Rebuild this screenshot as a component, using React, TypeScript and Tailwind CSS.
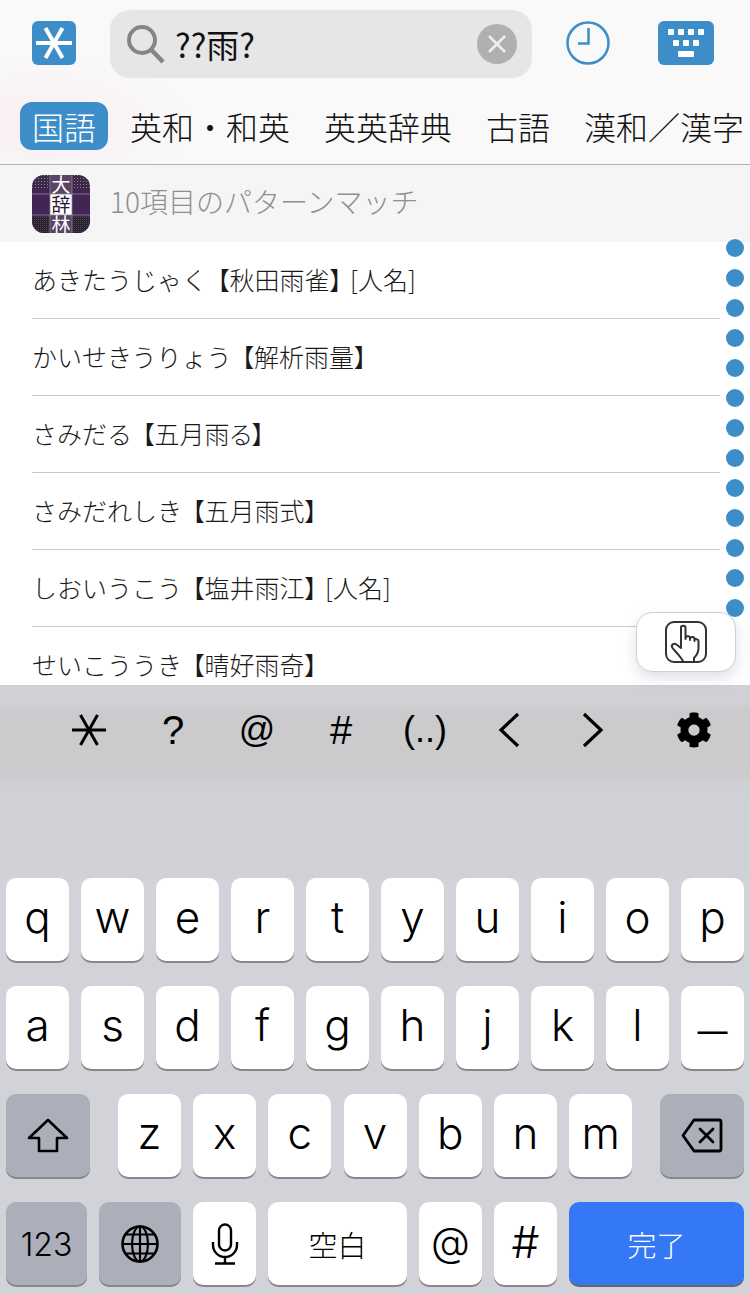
import { FaCog } from "react-icons/fa";

const BLUE = "#3d8dc9";

const tabs = ["英和・和英", "英英辞典", "古語", "漢和／漢字"];
const rows = [
  { kana: "あきたうじゃく", kanji: "秋田雨雀", tail: "[人名]" },
  { kana: "かいせきうりょう", kanji: "解析雨量", tail: "" },
  { kana: "さみだる", kanji: "五月雨る", tail: "" },
  { kana: "さみだれしき", kanji: "五月雨式", tail: "" },
  { kana: "しおいうこう", kanji: "塩井雨江", tail: "[人名]" },
  { kana: "せいこううき", kanji: "晴好雨奇", tail: "" },
];
const dots = Array.from({ length: 13 }, (_, i) => i);

function Key({ label, className = "" }: { label: string; className?: string }) {
  return (
    <div
      className={
        "flex h-[83px] w-[63px] shrink-0 items-center justify-center rounded-[10px] bg-white font-['Inter',sans-serif] text-black shadow-[0_2px_0_#88888c] " +
        className
      }
    >
      {label}
    </div>
  );
}

function GrayKey({ className = "", children }: { className?: string; children: React.ReactNode }) {
  return (
    <div
      className={
        "flex h-[83px] shrink-0 items-center justify-center rounded-[10px] bg-[#acaeb9] text-black shadow-[0_2px_0_#88888c] " +
        className
      }
    >
      {children}
    </div>
  );
}

function Asterisk({ color, width, size, inset }: { color: string; width: number; size: number; inset: number }) {
  return (
    <svg width={size} height={size} viewBox="0 0 44 44" fill="none" stroke={color} strokeWidth={width} style={{ display: "block" }}>
      <path d={`M${inset} 22H${44 - inset}`} />
      <path d="M13.5 7L30.5 37" />
      <path d="M30.5 7L13.5 37" />
    </svg>
  );
}

function ToolText({ className, children }: { className: string; children: React.ReactNode }) {
  return (
    <div className={"flex w-[84px] shrink-0 items-center justify-center font-['Liberation_Sans',sans-serif] text-black " + className}>
      {children}
    </div>
  );
}

function DictIcon() {
  return (
    <svg width="58" height="58" viewBox="0 0 58 58" className="shrink-0">
      <defs>
        <pattern id="dots" width="3" height="3" patternUnits="userSpaceOnUse">
          <rect width="3" height="3" fill="#3d2a48" />
          <rect width="1" height="1" fill="#8a8590" />
        </pattern>
        <pattern id="check" width="2" height="2" patternUnits="userSpaceOnUse">
          <rect width="2" height="2" fill="#2a2030" />
          <rect width="1" height="1" fill="#4a4650" />
        </pattern>
        <clipPath id="round">
          <rect width="58" height="58" rx="12" />
        </clipPath>
      </defs>
      <g clipPath="url(#round)">
        <rect width="58" height="58" fill="#432555" />
        <rect width="58" height="14" fill="url(#dots)" />
        <rect y="42" width="58" height="16" fill="url(#check)" />
        <rect x="18" width="22" height="58" fill="#5a4466" />
        <rect x="18" y="19" width="22" height="21" fill="#ffffff" />
        <path d="M0 19H58M0 40H58M18 0V58M40 0V58" stroke="#8d8594" strokeWidth="0.8" />
        <text x="29" y="17" textAnchor="middle" fontSize="19" fill="#fff" fontFamily="'Noto Sans CJK JP',sans-serif">大</text>
        <text x="29" y="37" textAnchor="middle" fontSize="19" fill="#2a1a35" fontFamily="'Noto Sans CJK JP',sans-serif">辞</text>
        <text x="29" y="57" textAnchor="middle" fontSize="19" fill="#fff" fontFamily="'Noto Sans CJK JP',sans-serif">林</text>
      </g>
    </svg>
  );
}

export default function App() {
  return (
    <div className="relative flex h-[1294px] w-[750px] flex-col overflow-hidden bg-white font-['Noto_Sans_CJK_JP',sans-serif]">
      {/* header */}
      <div className="h-[165px] shrink-0 border-b border-[#b4b4b6] bg-[#f9f9f9] bg-[radial-gradient(ellipse_150px_70px_at_40px_125px,#f9eef1,#f9f9f9)]">
        <div className="mt-[10px] flex h-[68px] items-center pt-0">
          <div className="mb-[2px] ml-[32px] flex h-[44px] w-[44px] items-center justify-center rounded-[6px] bg-[#3d8dc9]">
            <Asterisk color="#fff" width={4} size={44} inset={4} />
          </div>
          <div className="ml-[34px] flex h-[68px] w-[422px] items-center rounded-[20px] bg-[#e6e6e8] pl-[16px] pr-[15px]">
            <svg width="40" height="40" viewBox="0 0 40 40" fill="none" stroke="#858588" strokeWidth="4" className="mt-[2px] shrink-0">
              <circle cx="16" cy="15" r="13" />
              <path d="M25.5 25L37 37" strokeWidth="4.5" />
            </svg>
            <span className="ml-[9px] text-[33px] font-normal leading-none text-[#111]">??雨?</span>
            <div className="ml-auto flex h-[40px] w-[40px] items-center justify-center rounded-full bg-[#b0b0b2]">
              <svg width="20" height="20" viewBox="0 0 20 20" stroke="#eeeeee" strokeWidth="2.5">
                <path d="M2 2L18 18M18 2L2 18" />
              </svg>
            </div>
          </div>
          <svg width="44" height="44" viewBox="0 0 44 44" fill="none" stroke={BLUE} className="mb-[2px] ml-[34px]">
            <circle cx="22" cy="22" r="20.5" strokeWidth="2.5" />
            <path d="M22.5 7V22.5H12" strokeWidth="2.5" />
          </svg>
          <svg width="56" height="44" viewBox="0 0 56 44" className="mb-[2px] ml-[48px]" fill="#fff">
            <rect width="56" height="44" rx="6" fill={BLUE} />
            {[10, 20, 30, 40].map((x) => (
              <rect key={x} x={x} y="8" width="6" height="6" rx="1" />
            ))}
            {[15, 25, 35].map((x) => (
              <rect key={x} x={x} y="19" width="6" height="6" rx="1" />
            ))}
            <rect x="20" y="30" width="16" height="6" rx="1" />
          </svg>
        </div>
        <div className="mt-[24px] flex h-[48px] items-center whitespace-nowrap pl-[20px] text-[32px] font-light leading-none text-[#111]">
          <div className="mr-[22px] flex h-[48px] w-[88px] shrink-0 items-center justify-center rounded-[12px] bg-[#3d8dc9] text-white">国語</div>
          <div className="flex gap-[34px]">
            {tabs.map((t) => (
              <span key={t}>{t}</span>
            ))}
          </div>
        </div>
      </div>

      {/* dictionary heading */}
      <div className="flex h-[77px] shrink-0 items-center bg-[#f5f5f5] pl-[32px]">
        <DictIcon />
        <span className="ml-[20px] mt-[-6px] text-[28px] font-light leading-none text-[#8f8f92]">10項目のパターンマッチ</span>
      </div>

      {/* result list */}
      <div className="h-[443px] shrink-0 overflow-hidden bg-white pl-[32px] pr-[30px]">
        {rows.map((r) => (
          <div key={r.kana} className="flex h-[77px] items-center border-b border-[#c8c8ca] pb-[1px] text-[25px] font-light text-[#1a1a1a] last:border-b-0">
            <span>{r.kana}</span>
            <span className="ml-[10px] [font-feature-settings:'palt']">【{r.kanji}】</span>
            {r.tail ? <span className="ml-[8px]">{r.tail}</span> : null}
          </div>
        ))}
      </div>

      {/* wildcard toolbar */}
      <div className="h-[193px] shrink-0 bg-[linear-gradient(#d0d0d5_0px,#d0d0d5_20px,#cbcbcd_24px,#cbcbcd_88px,#cfd1d6_100px,#d0d2d8_193px)]">
        <div className="flex h-[90px] items-center pl-[47px]">
          <div className="flex w-[84px] shrink-0 items-center justify-center">
            <Asterisk color="#000" width={3} size={44} inset={5} />
          </div>
          <ToolText className="text-[40px]">?</ToolText>
          <ToolText className="text-[36px]">@</ToolText>
          <ToolText className="text-[40px]">#</ToolText>
          <ToolText className="text-[36px]">(..)</ToolText>
          <div className="flex w-[84px] shrink-0 justify-center">
            <svg width="24" height="36" viewBox="0 0 24 36" fill="none" stroke="#000" strokeWidth="3.2">
              <path d="M21 2L4 18L21 34" />
            </svg>
          </div>
          <div className="flex w-[84px] shrink-0 justify-center">
            <svg width="24" height="36" viewBox="0 0 24 36" fill="none" stroke="#000" strokeWidth="3.2">
              <path d="M3 2L20 18L3 34" />
            </svg>
          </div>
          <div className="ml-[17px] flex w-[84px] shrink-0 justify-center">
            <FaCog size={36} color="#000" />
          </div>
        </div>
      </div>

      {/* keyboard */}
      <div className="flex flex-1 flex-col gap-[25px] bg-[#d1d3d9] px-[6px]">
        <div className="flex gap-[12px]">
          {"qwertyuiop".split("").map((c) => (
            <Key key={c} label={c} className="pb-[6px] text-[44px] font-light" />
          ))}
        </div>
        <div className="flex gap-[12px]">
          {"asdfghjkl".split("").map((c) => (
            <Key key={c} label={c} className="pb-[6px] text-[44px] font-light" />
          ))}
          <Key label="—" className="pt-[8px] text-[30px] font-normal" />
        </div>
        <div className="flex">
          <GrayKey className="mr-[28px] w-[84px]">
            <svg width="42" height="38" viewBox="0 0 42 38" fill="none" stroke="#000" strokeWidth="2.6" strokeLinejoin="round">
              <path d="M21 3L40 21H30V34H12V21H2Z" />
            </svg>
          </GrayKey>
          <div className="flex gap-[12.2px]">
            {"zxcvbnm".split("").map((c) => (
              <Key key={c} label={c} className="pb-[6px] text-[44px] font-light" />
            ))}
          </div>
          <GrayKey className="ml-[28px] w-[84px]">
            <svg width="42" height="35" viewBox="0 0 42 35" fill="none" stroke="#000" strokeWidth="2.8" strokeLinejoin="round" strokeLinecap="round">
              <path d="M13 2H38A2 2 0 0 1 40 4V31A2 2 0 0 1 38 33H13L2 17.5Z" />
              <path d="M19 11L32 24M32 11L19 24" />
            </svg>
          </GrayKey>
        </div>
        <div className="flex gap-[12px]">
          <GrayKey className="w-[81px] pt-[3px] font-['Inter',sans-serif] text-[32px] font-light">123</GrayKey>
          <GrayKey className="w-[82px]">
            <svg width="38" height="38" viewBox="0 0 38 38" fill="none" stroke="#000" strokeWidth="2.2">
              <circle cx="19" cy="19" r="17.5" strokeWidth="2.6" />
              <ellipse cx="19" cy="19" rx="8" ry="17.5" />
              <path d="M19 1.5V36.5M1.5 19H36.5M4.5 9.5H33.5M4.5 28.5H33.5" />
            </svg>
          </GrayKey>
          <div className="flex h-[83px] w-[63px] shrink-0 items-center justify-center rounded-[10px] bg-white shadow-[0_2px_0_#88888c]">
            <svg width="28" height="42" viewBox="0 0 28 42" fill="none" stroke="#000" strokeWidth="2.4">
              <rect x="8" y="1.5" width="12" height="26" rx="6" />
              <path d="M2 19V22A12 12 0 0 0 26 22V19M14 34V40M4 40.5H24" />
            </svg>
          </div>
          <div className="flex h-[83px] w-[139px] shrink-0 items-center justify-center rounded-[10px] bg-white pt-[2px] text-[29px] font-light text-black shadow-[0_2px_0_#88888c]">
            空白
          </div>
          <Key label="@" className="pb-[4px] text-[40px] font-light" />
          <Key label="#" className="pb-[4px] text-[44px] font-light" />
          <div className="flex h-[83px] w-[175px] shrink-0 items-center justify-center rounded-[10px] bg-[#3478f6] pt-[2px] text-[29px] font-light text-white shadow-[0_2px_0_#66666c]">
            完了
          </div>
        </div>
      </div>

      {/* index dots, overlay on the right edge */}
      <div className="absolute left-[726px] top-[239px] flex flex-col gap-[12px]">
        {dots.map((d) => (
          <div key={d} className="h-[18px] w-[18px] rounded-full bg-[#3d8dc9]" />
        ))}
      </div>

      {/* floating touch button */}
      <div className="absolute left-[636px] top-[612px] flex h-[60px] w-[100px] items-center justify-center rounded-[16px] border border-[#d0d0d0] bg-white shadow-[0_6px_14px_rgba(120,130,150,0.25)]">
        <svg width="42" height="42" viewBox="0 0 42 42" fill="none" stroke="#333" strokeWidth="2">
          <rect x="1" y="1" width="40" height="40" rx="8" />
          <path
            d="M16 27V6.5C16 4 20.5 4 20.5 6.5V18M20.5 17C21 14.5 25 14.5 25 17V19M25 17.5C25.5 15.5 29.5 15.5 29.5 18V20M29.5 19C30 17.5 33.5 18 33.5 20V27C33.5 32 31 35 29 37V40M16 27L11.5 23.5C8.5 21.5 5.5 24.5 7.5 27C10 30 13 33 16 37L18 40"
            strokeLinecap="round"
            strokeLinejoin="round"
          />
        </svg>
      </div>
    </div>
  );
}
